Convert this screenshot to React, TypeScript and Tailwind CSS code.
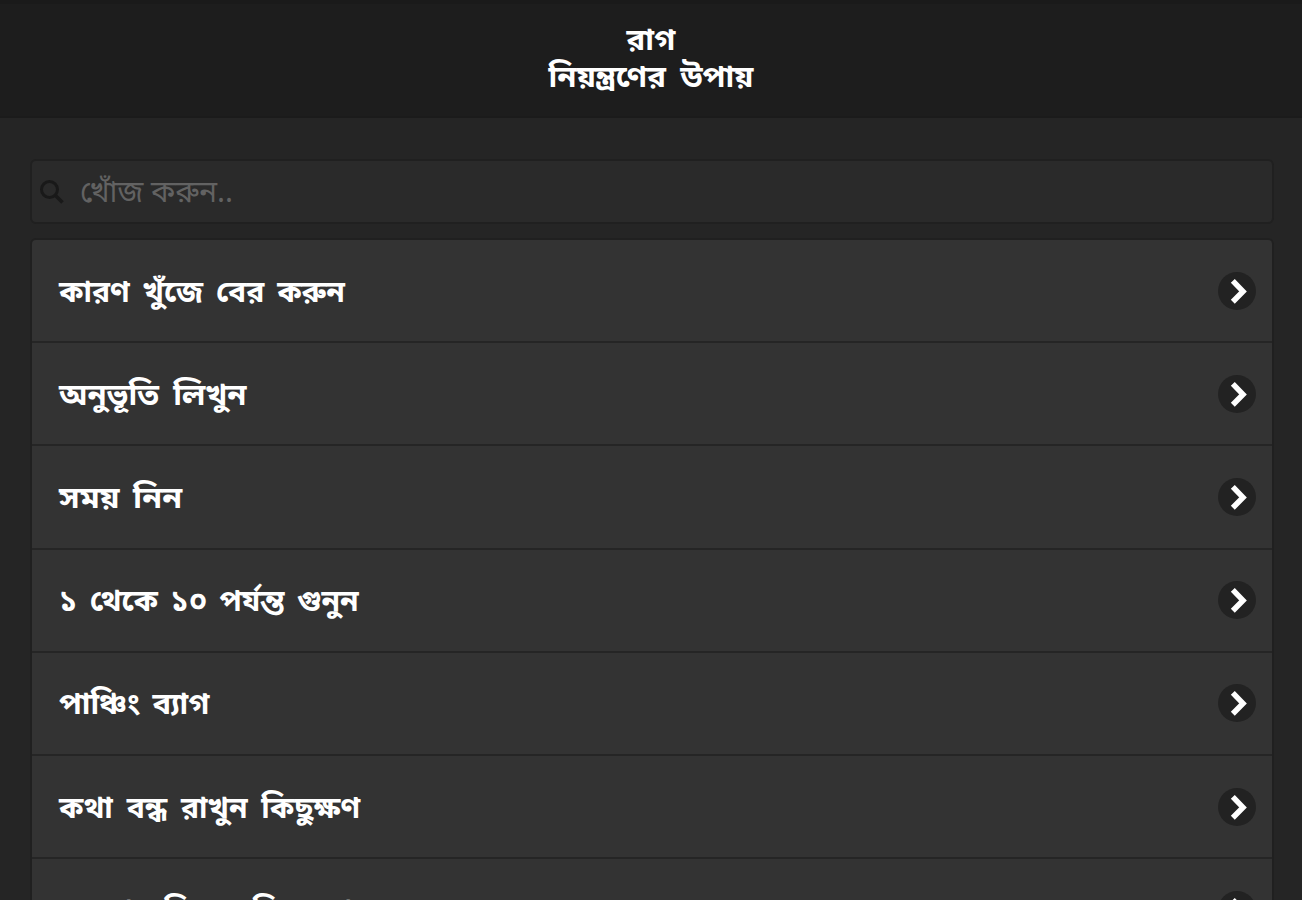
import clsx from 'clsx'
import React, { FC } from 'react'

type Tip = {
  title: string
  spacing: string
}

const tips: Tip[] = [
  { title: 'কারণ খুঁজে বের করুন', spacing: '[word-spacing:5.2px]' },
  { title: 'অনুভূতি লিখুন', spacing: '[word-spacing:6px] scale-x-[1.03]' },
  { title: 'সময় নিন', spacing: '[word-spacing:5px] scale-x-[1.07]' },
  { title: '১ থেকে ১০ পর্যন্ত গুনুন', spacing: '[word-spacing:4.8px]' },
  { title: 'পাঞ্চিং ব্যাগ', spacing: '[word-spacing:4px] scale-x-[1.025]' },
  { title: 'কথা বন্ধ রাখুন কিছুক্ষণ', spacing: '[word-spacing:6px]' },
  { title: 'সমস্যার বিষয়ে বিবেচনা', spacing: '[word-spacing:5px]' }
]

const SearchIcon: FC = (): JSX.Element => (
  <svg viewBox="0 0 24 24" className="w-6 h-6 shrink-0" fill="none" stroke="#191919">
    <circle cx="9.5" cy="9.5" r="8" strokeWidth="3" />
    <path d="M15.5 15.5L22.5 22.5" strokeWidth="3.5" />
  </svg>
)

const ArrowIcon: FC = (): JSX.Element => (
  <svg viewBox="0 0 38 38" className="w-[38px] h-[38px] shrink-0" fill="none">
    <circle cx="19" cy="19" r="19" fill="#222" />
    <path d="M14.8 8.9L25 19.4L14.8 29.8" stroke="#fff" strokeWidth="5.5" />
  </svg>
)

const App: FC = (): JSX.Element => {
  return (
    <main className="h-[900px] overflow-hidden bg-[#252525] font-['Noto_Sans','Noto_Sans_Bengali',sans-serif] text-white">
      {/* Header */}
      <header className="h-[118px] bg-[#1d1d1d] border-t-4 border-t-[#1a1a1a] border-b-2 border-b-[#1b1b1b] pt-4 text-center font-bold text-[30px] leading-[37px]">
        <h1 className="[word-spacing:6px] scale-x-[1.035]">
          রাগ
          <br />
          নিয়ন্ত্রণের উপায়
        </h1>
      </header>
      <section className="pl-[30px] pr-7 pt-[41px]">
        {/* Search */}
        <label className="flex items-center h-[65px] rounded-md border-2 border-[#202020] bg-[#2a2a2a] pl-2 gap-4">
          <SearchIcon />
          <span className="text-[30px] leading-[40px] text-[#626262] -mt-0.5">খোঁজ করুন..</span>
        </label>
        {/* Tips */}
        <ul className="mt-[14px] rounded-t-md border-2 border-[#202020] bg-[#333]">
          {tips.map(({ title, spacing }) => (
            <li
              key={title}
              className="flex items-center justify-between h-[103.2px] border-b-2 border-[#252525] pl-[27px] pr-4"
            >
              <span
                className={clsx(
                  'origin-left font-bold text-[30px] leading-[40px] whitespace-nowrap',
                  spacing
                )}
              >
                {title}
              </span>
              <ArrowIcon />
            </li>
          ))}
        </ul>
      </section>
    </main>
  )
}

export default App
